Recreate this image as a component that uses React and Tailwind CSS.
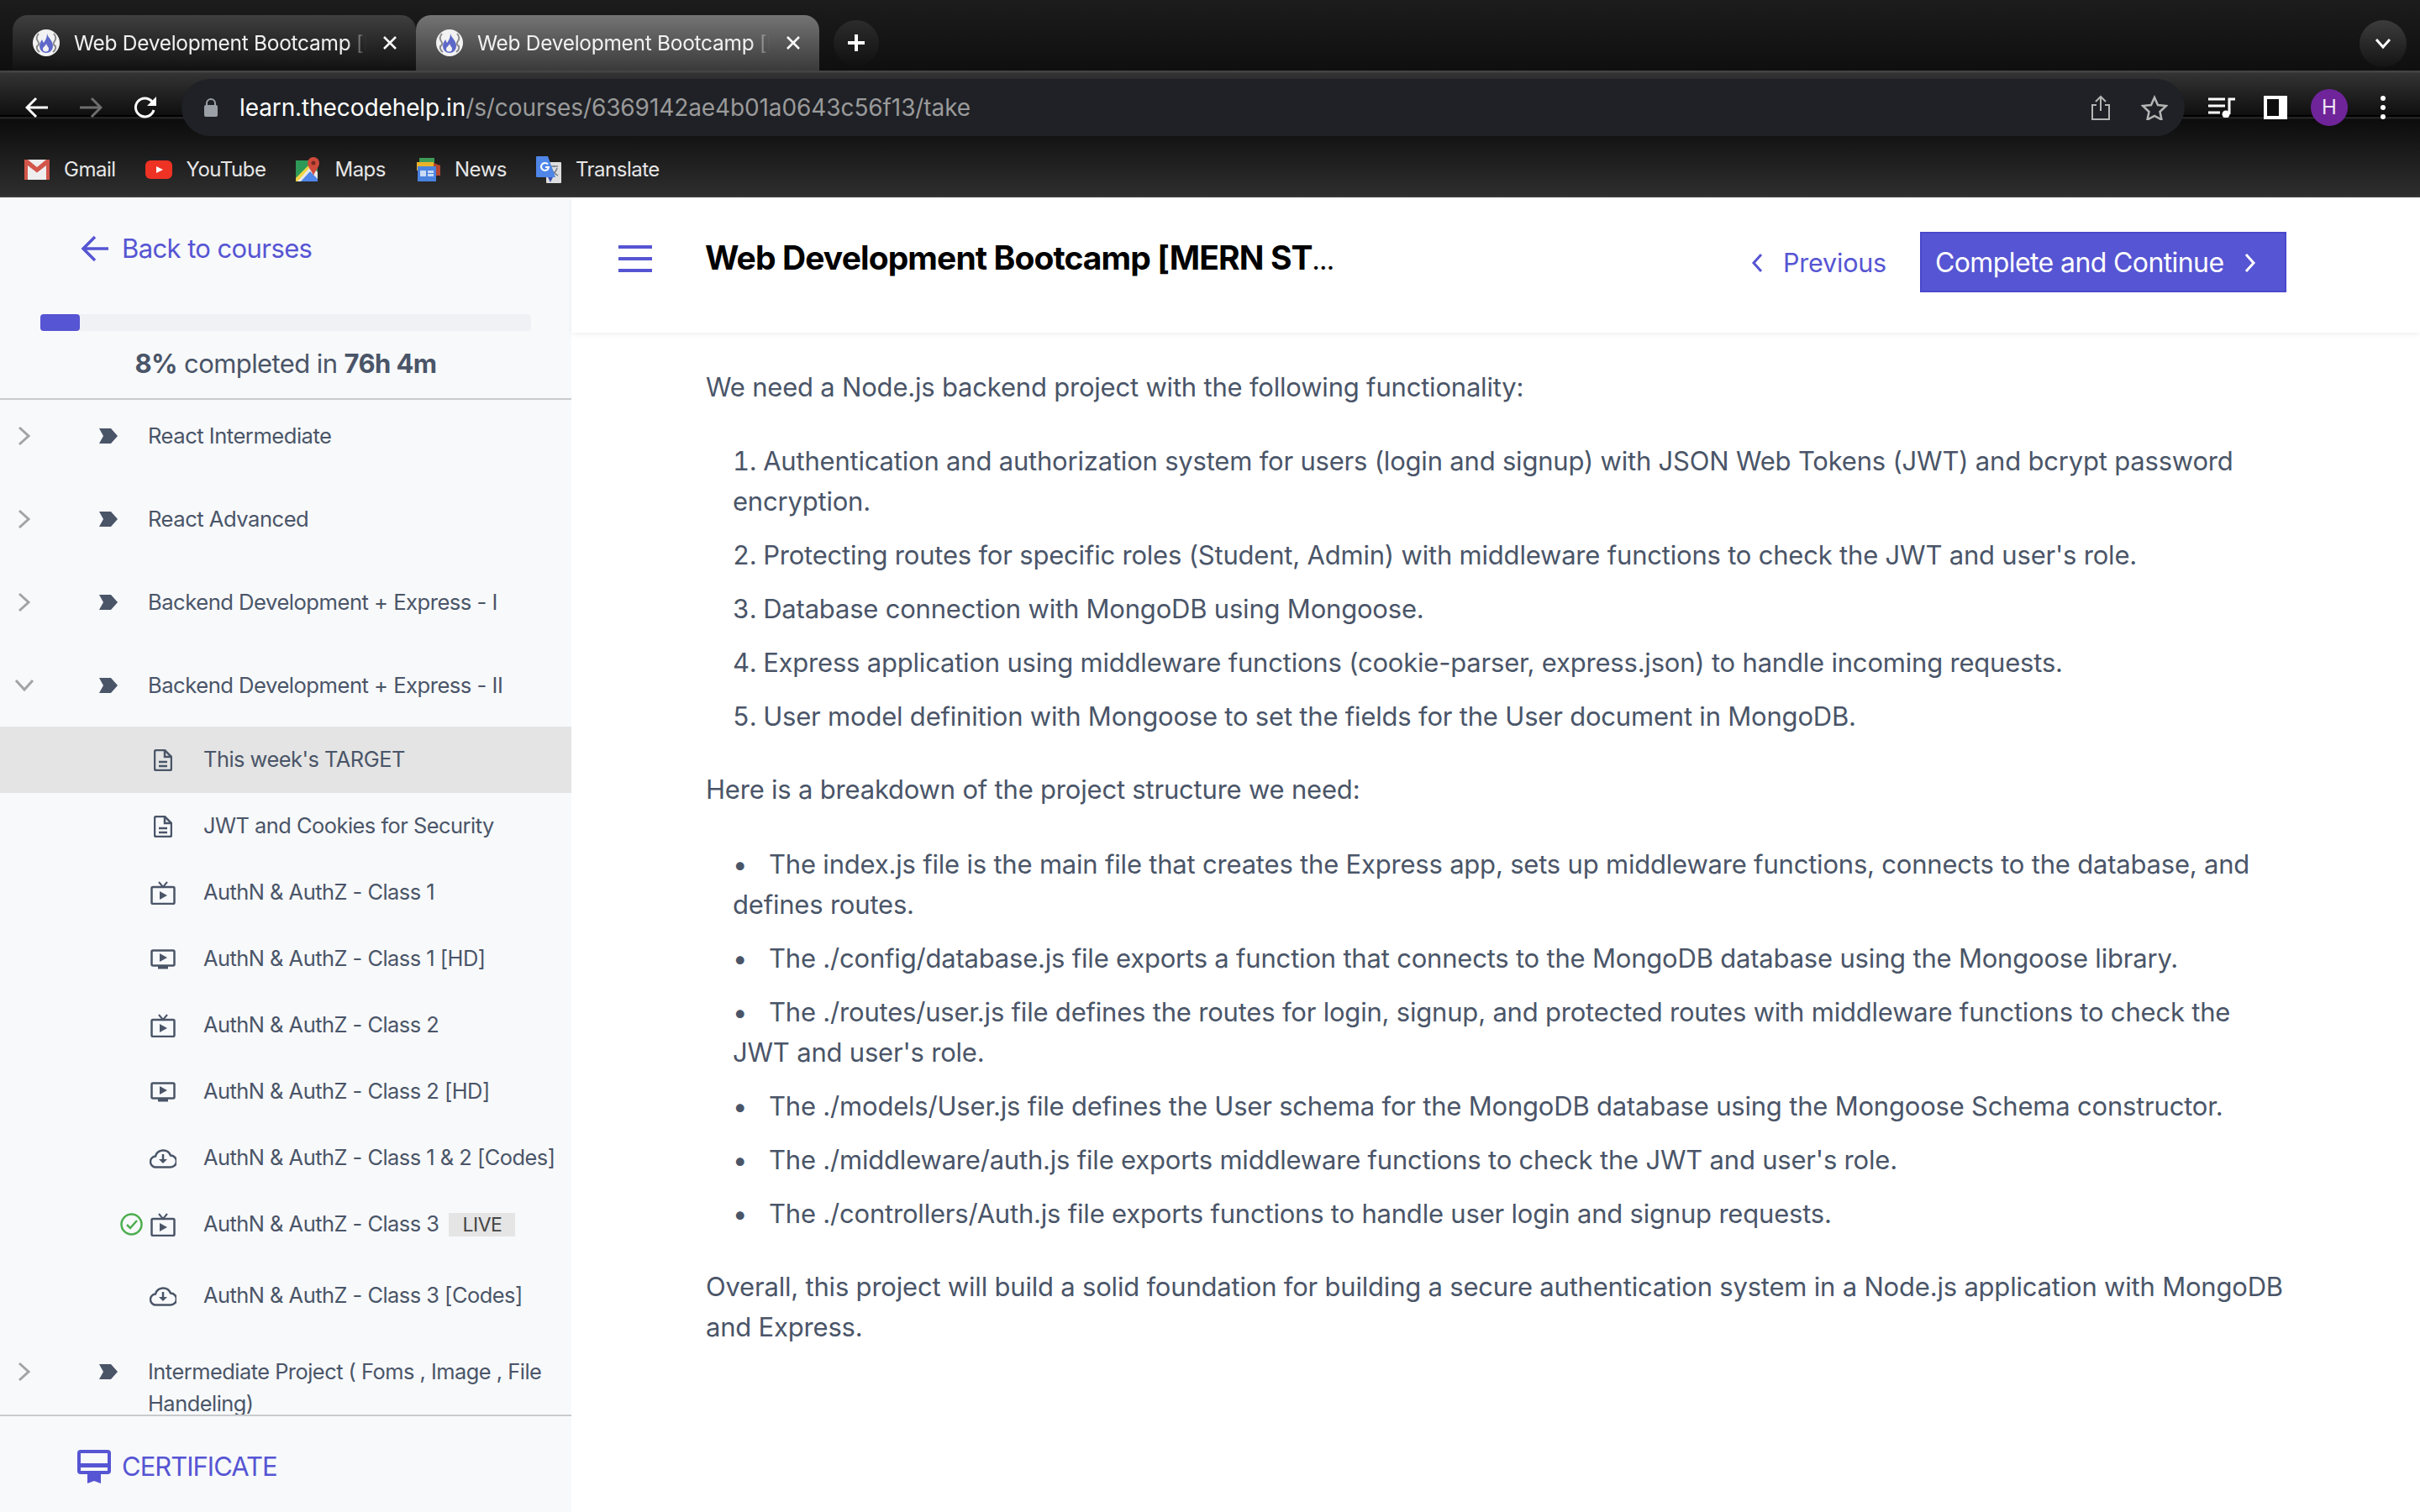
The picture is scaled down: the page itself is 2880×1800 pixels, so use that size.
import React from 'react';

const Favicon = () => (
    <svg width="32" height="32" viewBox="0 0 32 32" className="shrink-0">
        <circle cx="16" cy="16" r="16" fill="#f2f2f2" />
        <path d="M7 5q-4 5-1 9t-1 6q-1 4 3 7" fill="none" stroke="#8a8a8a" strokeWidth="2" />
        <path d="M25 5q4 5 1 9t1 6q1 4-3 7" fill="none" stroke="#8a8a8a" strokeWidth="2" />
        <path d="M17 5c1 5 7 8 7 15a8 8 0 0 1-16 0c0-4 2-6 3-8 1 2 1 3 2 4 2-3 4-6 4-11z" fill="#5d68c9" />
        <path d="M16 17c1 3 3 4 3 6a3.500 3.500 0 0 1-7 0c0-2 3-3 4-6z" fill="#f2f2f2" />
    </svg>
);

const Tab = ({ active }) => (
    <div className={`relative flex h-[66px] w-[480px] items-center rounded-t-[18px] pl-[24px] ${active ? 'bg-[linear-gradient(180deg,#747474,#3a3a3a)]' : 'bg-[linear-gradient(180deg,#3f3f3f,#111111)]'}`}>
        <Favicon />
        <div className="ml-[17px] w-[350px] overflow-hidden whitespace-nowrap text-[24.500px] tracking-[-0.3px] text-[#f1f1f1] [mask-image:linear-gradient(90deg,#000_325px,transparent_348px)]">Web Development Bootcamp [MERN Stack]</div>
        <svg width="18" height="18" viewBox="0 0 18 18" className="ml-[17px]"><path d="M2 2l14 14M16 2L2 16" stroke="#fff" strokeWidth="2.500" /></svg>
    </div>
);

const Bookmark = ({ icon, label, mr }) => (
    <div className={`flex items-center ${mr}`}>
        {icon}
        <span className="ml-[17px] text-[24px] tracking-[-0.5px] text-[#e6e6e6]">{label}</span>
    </div>
);

const GmailIcon = () => (
    <svg width="30" height="24" viewBox="0 0 30 24"><rect width="30" height="24" rx="1" fill="#eeeeee" /><path d="M0 0h4l11 9 11-9h4v24h-4V7l-11 8.500L4 7v17H0z" fill="#d2564a" /></svg>
);
const YoutubeIcon = () => (
    <svg width="32" height="22" viewBox="0 0 32 22"><rect width="32" height="22" rx="6" fill="#ee3224" /><path d="M13 7l8 4-8 4z" fill="#fff" /></svg>
);
const MapsIcon = () => (
    <svg width="30" height="30" viewBox="0 0 30 30">
        <path d="M1 4h20l6 10v15H1z" fill="#2f9a58" />
        <path d="M1 29L19 10l8 8v11z" fill="#e8e8e8" />
        <path d="M7 29l11-12 9 9v3z" fill="#4f86e8" />
        <path d="M1 25L17 9l2 2L3 29H1z" fill="#f5d547" />
        <path d="M22 0a7 7 0 0 1 7 7c0 5-5 9-7 15-2-6-7-10-7-15a7 7 0 0 1 7-7z" fill="#cf4a3b" />
        <circle cx="22" cy="7" r="2.500" fill="#7a2a22" />
    </svg>
);
const NewsIcon = () => (
    <svg width="30" height="30" viewBox="0 0 30 30">
        <path d="M5 1h18v10H5z" fill="#3e9c57" />
        <path d="M2 6h20v10H2z" fill="#eab32a" />
        <path d="M22 7l8 3v12h-8z" fill="#b4462f" />
        <rect x="3" y="11" width="22" height="18" fill="#4a82e0" />
        <rect x="6" y="16" width="7" height="7" fill="#c9dbf7" />
        <rect x="15" y="16" width="7" height="3" fill="#c9dbf7" />
        <rect x="15" y="20" width="7" height="3" fill="#c9dbf7" />
    </svg>
);
const TranslateIcon = () => (
    <svg width="30" height="32" viewBox="0 0 30 32">
        <rect x="12" y="7" width="18" height="25" rx="1" fill="#dedede" />
        <path d="M16 12h10M21 11v2M18 14c2 5 4 7 8 9M25 14c-1 4-4 7-8 9" stroke="#75808c" strokeWidth="1.500" fill="none" />
        <path d="M1 0h13l9 25H1a1 1 0 0 1-1-1V1a1 1 0 0 1 1-1z" fill="#4f86e8" />
        <path d="M14 25h6l-3 6z" fill="#3d52b0" />
        <path d="M14 9.500a4.500 4.500 0 1 0 1 3.500h-4" fill="none" stroke="#fff" strokeWidth="2" />
    </svg>
);

function BrowserChrome() {
    return (
        <div className="shrink-0">
            <div className="relative flex h-[84px] items-end bg-[linear-gradient(180deg,#1c1c1c,#0f0f0f)] pl-[15px]">
                <Tab />
                <Tab active />
                <div className="mb-[6px] ml-[17px] flex h-[54px] w-[54px] items-center justify-center rounded-full bg-[linear-gradient(180deg,#2c2c2c,#111111)]">
                    <svg width="24" height="24" viewBox="0 0 24 24"><path d="M12 2v20M2 12h20" stroke="#fff" strokeWidth="4" /></svg>
                </div>
                <div className="ml-auto mb-[4px] mr-[16px] flex h-[56px] w-[56px] items-center justify-center rounded-full bg-[linear-gradient(180deg,#3c3c3c,#141414)]">
                    <svg width="20" height="14" viewBox="0 0 20 14"><path d="M2 2l8 9 8-9" fill="none" stroke="#fff" strokeWidth="3" /></svg>
                </div>
            </div>
            <div className="h-[151px] bg-[linear-gradient(180deg,#444444_0px,#444444_2px,#333333_3px,#0f0f0f_53px,#000000_53px,#000000_55px,#242424_55px,#242424_57px,#0c0c0c_58px,#2e2e2e_149px,#3a3a3a_149px)]">
                <div className="flex h-[78px] items-center pt-[10px]">
                    <svg width="28" height="26" viewBox="0 0 28 26" className="ml-[30px]"><path d="M27 13H3M13 2L2 13l11 11" fill="none" stroke="#fff" strokeWidth="3" /></svg>
                    <svg width="28" height="26" viewBox="0 0 28 26" className="ml-[36px]"><path d="M1 13h24M15 2l11 11-11 11" fill="none" stroke="#6e6e6e" strokeWidth="3" /></svg>
                    <svg width="28" height="28" viewBox="0 0 28 28" className="ml-[37px]"><path d="M24 17a11 11 0 1 1-2-10" fill="none" stroke="#fff" strokeWidth="3" /><path d="M27 1v11H16z" fill="#fff" /></svg>
                    <div className="ml-[29px] flex h-[68px] w-[2384px] items-center rounded-full bg-[#1f2126] pl-[27px]">
                        <svg width="16" height="22" viewBox="0 0 16 22"><path d="M3 9V6a5 5 0 0 1 10 0v3" fill="none" stroke="#9aa0a6" strokeWidth="2" /><rect y="8" width="16" height="14" rx="2" fill="#9aa0a6" /></svg>
                        <span className="ml-[26px] text-[28px] tracking-[-0.1px] text-white">learn.thecodehelp.in<span className="text-[#9a9a9a]">/s/courses/6369142ae4b01a0643c56f13/take</span></span>
                        <svg width="22" height="30" viewBox="0 0 22 30" className="ml-auto"><path d="M11 19V2M5 8l6-6 6 6M6 12H1v17h20V12h-5" fill="none" stroke="#b5b5b5" strokeWidth="2" /></svg>
                        <svg width="32" height="30" viewBox="0 0 32 30" className="ml-[37px] mr-[20px]"><path d="M16 3l4 9 10 1-7.500 7 2 9.500L16 25l-8.500 4.500 2-9.500L2 13l10-1z" fill="none" stroke="#b5b5b5" strokeWidth="2.500" /></svg>
                    </div>
                    <svg width="32" height="24" viewBox="0 0 32 24" className="ml-[28px]"><path d="M0 2h20M0 10h20M0 18h14" stroke="#fff" strokeWidth="3" /><path d="M25 20V2h7" fill="none" stroke="#fff" strokeWidth="3" /><circle cx="21" cy="20" r="4.500" fill="#fff" /></svg>
                    <div className="ml-[34px] flex h-[28px] w-[28px] items-center border-[4px] border-white bg-white pr-[6px]"><div className="h-full w-full bg-[#0d0d0d]" /></div>
                    <div className="ml-[28px] flex h-[44px] w-[44px] items-center justify-center rounded-full bg-[#6f249a] text-[24px] text-[#f0e6f5]">H</div>
                    <div className="ml-[39px] flex flex-col gap-[5px]">
                        <div className="h-[6px] w-[6px] rounded-full bg-white" />
                        <div className="h-[6px] w-[6px] rounded-full bg-white" />
                        <div className="h-[6px] w-[6px] rounded-full bg-white" />
                    </div>
                </div>
                <div className="flex h-[73px] items-center pl-[29px] pt-[7px]">
                    <Bookmark icon={<GmailIcon />} label="Gmail" mr="mr-[35px]" />
                    <Bookmark icon={<YoutubeIcon />} label="YouTube" mr="mr-[35px]" />
                    <Bookmark icon={<MapsIcon />} label="Maps" mr="mr-[35px]" />
                    <Bookmark icon={<NewsIcon />} label="News" mr="mr-[35px]" />
                    <Bookmark icon={<TranslateIcon />} label="Translate" />
                </div>
            </div>
        </div>
    );
}

const DocIcon = () => (
    <svg width="22" height="26" viewBox="0 0 22 26"><path d="M3 1h10l8 8v14a2 2 0 0 1-2 2H3a2 2 0 0 1-2-2V3a2 2 0 0 1 2-2z" fill="none" stroke="#4a5568" strokeWidth="2.500" /><path d="M13 1v8h8M6 15h10M6 20h10" fill="none" stroke="#4a5568" strokeWidth="2.500" /></svg>
);
const TvIcon = () => (
    <svg width="30" height="28" viewBox="0 0 30 28"><path d="M10 1l5 6 5-6" fill="none" stroke="#4a5568" strokeWidth="2" /><rect x="1.500" y="7" width="27" height="20" rx="1.500" fill="none" stroke="#4a5568" strokeWidth="2.500" /><path d="M11 12l9 5-9 5z" fill="#4a5568" /></svg>
);
const ScreenIcon = () => (
    <svg width="30" height="24" viewBox="0 0 30 24"><rect x="1.500" y="1.500" width="27" height="18" rx="1.500" fill="none" stroke="#4a5568" strokeWidth="2.500" /><path d="M11 5l9 5-9 5z" fill="#4a5568" /><rect x="9" y="20" width="12" height="3.500" fill="#4a5568" /></svg>
);
const CloudIcon = () => (
    <svg width="32" height="24" viewBox="0 0 32 24"><path d="M8 22.500a6.500 6.500 0 0 1-1-13 9.500 9.500 0 0 1 18-1 7 7 0 0 1 0 14z" fill="none" stroke="#4a5568" strokeWidth="2.500" /><path d="M16 7v8" stroke="#4a5568" strokeWidth="2.500" /><path d="M11 13h10l-5 5z" fill="#4a5568" /></svg>
);

const sections = [
    { title: 'React Intermediate' },
    { title: 'React Advanced' },
    { title: 'Backend Development + Express - I' },
    { title: 'Backend Development + Express - II', open: true },
];

const lessons = [
    { title: "This week's TARGET", icon: <DocIcon />, active: true },
    { title: 'JWT and Cookies for Security', icon: <DocIcon /> },
    { title: 'AuthN & AuthZ - Class 1', icon: <TvIcon /> },
    { title: 'AuthN & AuthZ - Class 1 [HD]', icon: <ScreenIcon /> },
    { title: 'AuthN & AuthZ - Class 2', icon: <TvIcon /> },
    { title: 'AuthN & AuthZ - Class 2 [HD]', icon: <ScreenIcon /> },
    { title: 'AuthN & AuthZ - Class 1 & 2 [Codes]', icon: <CloudIcon /> },
    { title: 'AuthN & AuthZ - Class 3', icon: <TvIcon />, done: true, live: true },
    { title: 'AuthN & AuthZ - Class 3 [Codes]', icon: <CloudIcon />, tall: true },
];

const ArrowMark = () => (
    <svg width="22" height="18" viewBox="0 0 22 18" className="shrink-0"><path d="M0 0h14l8 9-8 9H0l5-9z" fill="#4a5568" /></svg>
);

const SectionRow = ({ title, open }) => (
    <div className={`flex h-[86px] items-center text-[25.600px] ${open ? 'mb-[6px]' : 'mb-[13px]'}`}>
        <div className="flex w-[118px] shrink-0 items-center pl-[21px]">
            {open ? (
                <svg width="24" height="16" viewBox="0 0 24 16" className="-ml-[4px]"><path d="M2 2l10 11L22 2" fill="none" stroke="#a3a3a3" strokeWidth="3" /></svg>
            ) : (
                <svg width="16" height="24" viewBox="0 0 16 24"><path d="M2 2l11 10L2 22" fill="none" stroke="#a3a3a3" strokeWidth="3" /></svg>
            )}
        </div>
        <ArrowMark />
        <span className="ml-[36px]">{title}</span>
    </div>
);

const LessonRow = ({ title, icon, active, done, live, tall }) => (
    <div className={`flex items-center ${tall ? 'h-[91px]' : 'h-[79px]'} ${active ? 'bg-[#e4e4e4]' : ''}`}>
        <div className="flex w-[143px] shrink-0 justify-end">
            {done && (
                <svg width="27" height="27" viewBox="0 0 27 27" className="-mr-[27px]"><circle cx="13.500" cy="13.500" r="12" fill="none" stroke="#4cae4f" strokeWidth="2.500" /><path d="M8 14l4 4 8-9" fill="none" stroke="#4cae4f" strokeWidth="2.500" /></svg>
            )}
        </div>
        <div className="flex w-[67px] shrink-0 justify-end">
            <div className="flex w-[32px] justify-center">{icon}</div>
        </div>
        <span className="ml-[32px] whitespace-nowrap">{title}</span>
        {live && <span className="ml-[12px] bg-[#e5e5e5] px-[16px] text-[23px] leading-[28px] text-[#444444]">LIVE</span>}
    </div>
);

function Sidebar() {
    return (
        <aside className="flex w-[680px] shrink-0 flex-col bg-[#f8f9fb] text-[25.400px] tracking-[-0.5px] text-[#4a5568]">
            <div className="h-[241px] shrink-0 border-b-2 border-[#c9cacd]">
                <div className="flex items-center pl-[96px] pt-[38px] text-[#5655d3]">
                    <svg width="33" height="32" viewBox="0 0 33 32"><path d="M33 16H3M17 2L3 16l14 14" fill="none" stroke="#5655d3" strokeWidth="3.500" /></svg>
                    <span className="ml-[16px] text-[31px] tracking-[-0.6px]">Back to courses</span>
                </div>
                <div className="ml-[48px] mt-[54px] h-[20px] w-[584px] rounded bg-[#f0f1f4]">
                    <div className="h-full w-[47px] rounded bg-[#5655d3]" />
                </div>
                <div className="mt-[19px] text-center text-[31px] leading-[40px] tracking-[-0.6px]"><b>8%</b> completed in <b>76h 4m</b></div>
            </div>
            <div className="min-h-0 flex-1 overflow-hidden">
                {sections.map((s) => <SectionRow key={s.title} {...s} />)}
                {lessons.map((l) => <LessonRow key={l.title} {...l} />)}
                <div className="flex pt-[26px] leading-[38px]">
                    <div className="flex h-[38px] w-[118px] shrink-0 items-center pl-[21px]">
                        <svg width="16" height="24" viewBox="0 0 16 24"><path d="M2 2l11 10L2 22" fill="none" stroke="#a3a3a3" strokeWidth="3" /></svg>
                    </div>
                    <div className="flex h-[38px] items-center"><ArrowMark /></div>
                    <span className="ml-[36px] w-[500px]">Intermediate Project ( Foms , Image , File Handeling)</span>
                </div>
            </div>
            <div className="flex h-[116px] shrink-0 items-center border-t-2 border-[#c9cacd] pl-[92px] pt-[6px] text-[#5655d3]">
                <svg width="40" height="40" viewBox="0 0 40 40"><path d="M4 0h32a4 4 0 0 1 4 4v21a4 4 0 0 1-4 4H4a4 4 0 0 1-4-4V4a4 4 0 0 1 4-4z" fill="#5655d3" /><rect x="4" y="4" width="32" height="12" fill="#f8f9fb" /><rect x="4" y="21" width="32" height="4" fill="#f8f9fb" /><path d="M12 29h16v11l-8-3-8 3z" fill="#5655d3" /></svg>
                <span className="ml-[13px] text-[31px] tracking-[-1px]">CERTIFICATE</span>
            </div>
        </aside>
    );
}

const steps = [
    'Authentication and authorization system for users (login and signup) with JSON Web Tokens (JWT) and bcrypt password encryption.',
    "Protecting routes for specific roles (Student, Admin) with middleware functions to check the JWT and user's role.",
    'Database connection with MongoDB using Mongoose.',
    'Express application using middleware functions (cookie-parser, express.json) to handle incoming requests.',
    'User model definition with Mongoose to set the fields for the User document in MongoDB.',
];

const files = [
    'The index.js file is the main file that creates the Express app, sets up middleware functions, connects to the database, and defines routes.',
    'The ./config/database.js file exports a function that connects to the MongoDB database using the Mongoose library.',
    "The ./routes/user.js file defines the routes for login, signup, and protected routes with middleware functions to check the JWT and user's role.",
    'The ./models/User.js file defines the User schema for the MongoDB database using the Mongoose Schema constructor.',
    "The ./middleware/auth.js file exports middleware functions to check the JWT and user's role.",
    'The ./controllers/Auth.js file exports functions to handle user login and signup requests.',
];

function Main() {
    return (
        <main className="min-w-0 flex-1 bg-white">
            <header className="flex h-[161px] items-center pl-[56px] pr-[159px] shadow-[0_2px_6px_rgba(0,0,0,0.06)]">
                <div className="-mt-[15px] flex h-[32px] w-[40px] flex-col justify-between">
                    <div className="h-[4px] bg-[#5655d3]" />
                    <div className="h-[4px] bg-[#5655d3]" />
                    <div className="h-[4px] bg-[#5655d3]" />
                </div>
                <h1 className="ml-[63px] -mt-[17px] text-[39px] font-bold tracking-[-0.9px] text-black">Web Development Bootcamp [MERN ST<span className="text-[26px]">…</span></h1>
                <div className="ml-auto -mt-[6px] flex items-center text-[#5655d3]">
                    <svg width="14" height="24" viewBox="0 0 14 24" className="ml-[6px]"><path d="M12 2L3 12l9 10" fill="none" stroke="#5655d3" strokeWidth="3" /></svg>
                    <span className="ml-[24px] text-[30.500px] tracking-[-0.2px]">Previous</span>
                </div>
                <div className="ml-[40px] -mt-[8px] flex h-[72px] w-[436px] items-center border-2 border-[#4a48cc] bg-[#5655d3] pl-[16px] pt-[2px] text-white">
                    <span className="text-[32px] tracking-[-0.6px]">Complete and Continue</span>
                    <svg width="14" height="24" viewBox="0 0 14 24" className="ml-[25px]"><path d="M2 2l9 10-9 10" fill="none" stroke="#fff" strokeWidth="3" /></svg>
                </div>
            </header>
            <div className="pl-[160px] pr-[159px] pt-[41px] text-[31px] leading-[48px] tracking-[-0.2px] text-[#4a5568]">
                <p className="mb-[40px]">We need a Node.js backend project with the following functionality:</p>
                <ol className="mb-[39px] list-inside list-decimal pl-[32px]">
                    {steps.map((s) => <li key={s} className="mb-[16px]">{s}</li>)}
                </ol>
                <p className="mb-[41px]">Here is a breakdown of the project structure we need:</p>
                <ul className="mb-[39px] pl-[32px]">
                    {files.map((f) => (
                        <li key={f} className="mb-[16px]"><span className="inline-block w-[43px]">•</span>{f}</li>
                    ))}
                </ul>
                <p>Overall, this project will build a solid foundation for building a secure authentication system in a Node.js application with MongoDB and Express.</p>
            </div>
        </main>
    );
}

export default function App() {
    return (
        <div className="flex h-[1800px] w-[2880px] flex-col overflow-hidden bg-white [font-family:Inter,sans-serif]">
            <BrowserChrome />
            <div className="flex min-h-0 flex-1">
                <Sidebar />
                <Main />
            </div>
        </div>
    );
}
